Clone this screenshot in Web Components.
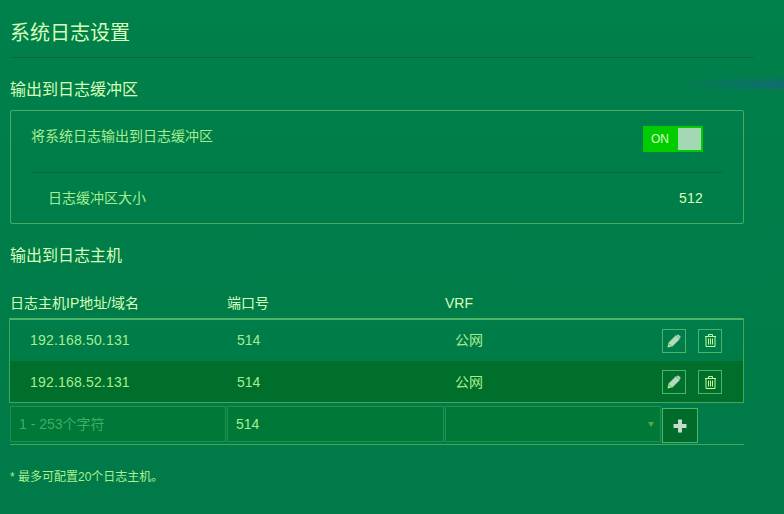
<!DOCTYPE html>
<html lang="zh"><head><meta charset="utf-8"><title>系统日志设置</title>
<style>
html,body{margin:0;padding:0;height:514px;overflow:hidden}
body{background:linear-gradient(180deg,#00804b 0,#007a48 100%);font-family:"Liberation Sans","Noto Sans CJK SC",sans-serif;color:#ccffaa;position:relative}
</style></head><body>
<syslog-page></syslog-page>
<script>
function def(name,css,html){
  customElements.define(name,class extends HTMLElement{
    connectedCallback(){
      if(this.shadowRoot)return;
      const r=this.attachShadow({mode:'open'});
      r.innerHTML='<style>'+css+'</style>'+(typeof html==='function'?html(this):html);
    }
  });
}
const pencil='<svg width="14" height="14" viewBox="0 0 13 13"><path d="M1.4 8.4 8.2 1.6 11.4 4.8 4.6 11.6Z" fill="#b9d8c0" stroke="#a5e890" stroke-width=".8"/><path d="M1.2 9 4 11.8 .4 12.6Z" fill="#a5f090"/><path d="M8.6 1.4 9.6.6Q10.2.1 10.8.6L12.4 2.2Q12.9 2.8 12.4 3.4L11.4 4.4Z" fill="#b4c8d8"/></svg>';
const trash='<svg width="11" height="13" viewBox="0 0 11 13" fill="none" stroke="#c0ff9c" stroke-width="1"><path d="M0 2.5H11M3.5 2.5V.5H7.5V2.5"/><path d="M1 2.5V12.5H10V2.5"/><path d="M3.5 4.5V10.5M5.5 4.5V10.5M7.5 4.5V10.5"/></svg>';
def('page-title',':host{display:block;height:47px;margin:10px 0 0;border-bottom:1px solid #076c33}div{font-size:20px;line-height:26px;padding-top:10px;color:#d8ffb8}','<div><slot></slot></div>');
def('section-title',':host{display:block;font-size:16px;line-height:20px;height:20px;padding-top:1px;margin-bottom:-1px;color:#d8ffb8;box-sizing:content-box}','<slot></slot>');
def('toggle-switch',':host{display:flex;box-sizing:border-box;width:60px;height:26px;background:#00cc00;padding:2px;align-items:stretch}span{flex:1;font-size:12px;line-height:22px;color:#d8ffc8;padding-left:6px}i{width:23px;background:#a4d8b4;display:block}','<span>ON</span><i></i>');
def('log-panel',':host{display:block;box-sizing:border-box;width:734px;height:114px;border:1px solid #45ad63;border-radius:2px;padding:0 20px;margin-top:11px}.a{display:flex;justify-content:space-between;height:61px;border-bottom:1px solid #076c33;padding-right:20px;font-size:14px;color:#a5ee90}.a span{line-height:20px;padding-top:15px}.a toggle-switch{margin-top:15px}.b{display:flex;justify-content:space-between;font-size:14px;line-height:20px;padding:15px 20px 0 17px;color:#a5ee90}.b b{font-weight:400;color:#d8ffb8;letter-spacing:.2px}',
 '<div class="a"><span>将系统日志输出到日志缓冲区</span><toggle-switch></toggle-switch></div><div class="b"><span>日志缓冲区大小</span><b>512</b></div>');
def('icon-btn',':host{display:flex;box-sizing:border-box;width:24px;height:24px;border:1px solid #4cb56a;align-items:center;justify-content:center}','<slot></slot>');
def('host-row',':host{display:grid;grid-template-columns:227px 218px 1fr 24px 12px 24px;height:41px;align-items:center;font-size:14px;line-height:20px;color:#a5ee90;padding-right:21px;box-sizing:border-box}:host([dark]){background:#006f2b}span{height:20px;margin-top:-1px}:host([dark]) span{margin-top:1px}.ip{padding-left:20px;letter-spacing:.18px}:host([dark]) icon-btn{margin-top:1px}',
 h=>`<span class="ip">${h.getAttribute('ip')}</span><span>514</span><span>公网</span><icon-btn>${pencil}</icon-btn><i></i><icon-btn>${trash}</icon-btn>`);
def('add-row',':host{display:grid;grid-template-columns:216px 217px 216px 36px;column-gap:1px;height:39px;margin:3px 0 0 0;width:734px;border-bottom:1px solid #42a85c;box-sizing:border-box}div{box-sizing:border-box;height:36px;background:#007838;border:1px solid #22904c;font-size:14px;line-height:34px;padding-left:8px;color:#a5ee90;position:relative}.ph{color:#3fae62}.sel::after{content:"";position:absolute;right:6px;top:15px;border:3px solid transparent;border-top:5px solid #5aa83e;border-bottom:0}.plus{width:36px;height:35px;margin-top:2px;padding:0;background:#006b2a;border-color:#4cb56a;display:flex;align-items:center;justify-content:center}',
 `<div class="ph">1 - 253个字符</div><div>514</div><div class="sel"></div><div class="plus"><svg width="14" height="14" viewBox="0 0 14 14"><path d="M5 .5H9V5H13.5V9H9V13.5H5V9H.5V5H5Z" fill="#c4dcc8"/></svg></div>`);
def('host-table',':host{display:block}.h{display:grid;grid-template-columns:217px 218px 1fr;font-size:14px;line-height:20px;color:#d8ffb8;height:25px}.t{box-sizing:border-box;width:735px;margin-left:-1px;height:85px;border:1px solid #42a85c;border-top:2px solid #4cb56a;border-radius:1px}',
 '<div class="h"><span>日志主机IP地址/域名</span><span>端口号</span><span>VRF</span></div><div class="t"><host-row ip="192.168.50.131"></host-row><host-row dark ip="192.168.52.131"></host-row></div><add-row></add-row>');
def('syslog-page',':host{display:block;padding:0 30px 0 10px;height:514px;box-sizing:border-box}section-title.s1{margin-top:21px}section-title.s2{margin-top:21px}host-table{margin-top:28px}.note{font-size:12px;line-height:16px;color:#a8f090;margin-top:24px}.glow{position:absolute;right:0;top:72px;width:120px;height:24px;background:radial-gradient(ellipse 105px 8px at 100% 50%,#146a78 0,#0d6f68 30%,rgba(0,125,75,0) 100%)}',
 '<div class="glow"></div><page-title>系统日志设置</page-title><section-title class="s1">输出到日志缓冲区</section-title><log-panel></log-panel><section-title class="s2">输出到日志主机</section-title><host-table></host-table><div class="note">* 最多可配置20个日志主机。</div>');
</script>
</body></html>
